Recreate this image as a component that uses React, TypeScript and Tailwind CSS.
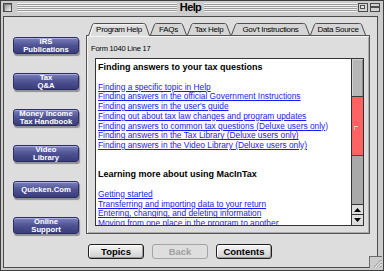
import React from 'react';

const sideButtons: string[][] = [
  ['IRS', 'Publications'],
  ['Tax', 'Q&A'],
  ['Money Income', 'Tax Handbook'],
  ['Video', 'Library'],
  ['Quicken.Com'],
  ['Online', 'Support'],
];

const tabs = [
  { label: 'Program Help', w: 62, cls: 'w-[62px]', active: true },
  { label: 'FAQs', w: 37, cls: 'w-[37px]', active: false },
  { label: 'Tax Help', w: 44, cls: 'w-[44px]', active: false },
  { label: "Gov't Instructions", w: 79, cls: 'w-[79px]', active: false },
  { label: 'Data Source', w: 56, cls: 'w-[56px]', active: false },
];

type Line = { kind: 'h' | 'a' | 'gap'; text?: string };

const lines: Line[] = [
  { kind: 'h', text: 'Finding answers to your tax questions' },
  { kind: 'gap' },
  { kind: 'a', text: 'Finding a specific topic in Help' },
  { kind: 'a', text: 'Finding answers in the official Government Instructions' },
  { kind: 'a', text: "Finding answers in the user's guide" },
  { kind: 'a', text: 'Finding out about tax law changes and program updates' },
  { kind: 'a', text: 'Finding answers to common tax questions (Deluxe users only)' },
  { kind: 'a', text: 'Finding answers in the Tax Library (Deluxe users only)' },
  { kind: 'a', text: 'Finding answers in the Video Library (Deluxe users only)' },
  { kind: 'gap' },
  { kind: 'gap' },
  { kind: 'h', text: 'Learning more about using MacInTax' },
  { kind: 'gap' },
  { kind: 'a', text: 'Getting started' },
  { kind: 'a', text: 'Transferring and importing data to your return' },
  { kind: 'a', text: 'Entering, changing, and deleting information' },
  { kind: 'a', text: 'Moving from one place in the program to another' },
];

const stripes =
  'h-[9px] bg-[repeating-linear-gradient(to_bottom,#f2f2f2_0px,#f2f2f2_1px,#9b9b9b_1px,#9b9b9b_2px)]';

function TitleBar() {
  return (
    <div className="h-[15px] flex items-start pt-[2px] pl-[2px] pr-[3px]">
      {/* close box */}
      <div className="w-[9px] h-[9px] border border-[#4a4a4a] bg-linear-to-br from-[#8e8e8e] to-[#f2f2f2] shadow-[inset_1px_1px_0_#7a7a7a]" />
      <div className={`ml-[5px] w-[160px] ${stripes}`} />
      <div className="w-[27px] h-[9px] flex items-center justify-center text-[11px] font-bold leading-none tracking-[-0.6px] text-black">
        Help
      </div>
      <div className={`flex-1 ${stripes}`} />
      {/* zoom box */}
      <div className="ml-[1px] w-[10px] h-[9px] border border-[#4a4a4a] bg-[#d2d2d2] p-px">
        <div className="w-[5px] h-[4px] border border-[#505050] bg-[#e8e8e8]" />
      </div>
      {/* collapse box */}
      <div className="ml-[2px] w-[10px] h-[9px] border border-[#4a4a4a] bg-[#d2d2d2] pt-[2px]">
        <div className="h-[2px] border-y border-[#505050]" />
      </div>
    </div>
  );
}

function SideButton({ text }: { text: string[] }) {
  return (
    <div className="w-[66px] h-[17px] rounded-[3px] border border-[#2b2d63] bg-linear-to-b from-[#7b7fbb] via-[#4f5393] to-[#3a3d7b] shadow-[inset_0_1px_0_#a9addf,1px_2px_1px_rgba(0,0,0,0.35)] flex flex-col items-center justify-center text-white font-bold text-[7.7px] leading-[7.5px] whitespace-nowrap">
      {text.map((t) => (
        <span key={t}>{t}</span>
      ))}
    </div>
  );
}

function Tab({ label, w, cls, active }: { label: string; w: number; cls: string; active: boolean }) {
  const h = active ? 13 : 12;
  const d = `M0.5 ${h} L4.5 1.5 Q5 0.5 6.5 0.5 L${w - 6.5} 0.5 Q${w - 5} 0.5 ${w - 4.5} 1.5 L${w - 0.5} ${h}`;
  return (
    <div
      className={`relative ${cls} ${active ? 'h-[13px] -mb-px z-10 pb-px' : 'h-[12px]'} flex items-center justify-center`}
    >
      <svg className="absolute inset-0" width={w} height={h} viewBox={`0 0 ${w} ${h}`}>
        <path d={d} fill={active ? '#dddddd' : '#d5d5d5'} stroke="#4f4f4f" strokeWidth="1" />
        {active && <path d={`M1.8 ${h} L5.6 2 L${w - 6.5} 1.6`} fill="none" stroke="#fafafa" strokeWidth="1" />}
      </svg>
      <span className="relative pt-px text-[8px] leading-none tracking-[-0.3px] text-black whitespace-nowrap">
        {label}
      </span>
    </div>
  );
}

function Scrollbar() {
  return (
    <div className="w-[12px] border-l border-[#333] flex flex-col bg-[#a9a9a9]">
      <div className="h-[38px] bg-[#b6b6b6] border-b border-[#3a3a3a] shadow-[inset_1px_1px_0_#d2d2d2,inset_-1px_0_0_#8a8a8a]" />
      <div className="h-[59px] bg-[#ff6262] border-b border-[#7a3030] flex items-center pl-[2px] pt-[3px]">
        <div className="w-[4px] h-[4px] border-l border-t border-[#ffc0c0]" />
      </div>
      <div className="flex-1" />
      <div className="h-[10px] border-t border-[#333] bg-[#dcdcdc] flex items-center justify-center">
        <svg width="7" height="4" viewBox="0 0 7 4">
          <path d="M3.5 0 L7 4 L0 4 Z" fill="#000" />
        </svg>
      </div>
      <div className="h-[11px] border-t border-[#333] bg-[#dcdcdc] flex items-center justify-center">
        <svg width="7" height="4" viewBox="0 0 7 4">
          <path d="M0 0 L7 0 L3.5 4 Z" fill="#000" />
        </svg>
      </div>
    </div>
  );
}

function PushButton({ label, disabled }: { label: string; disabled?: boolean }) {
  return (
    <div
      className={
        disabled
          ? 'w-[56px] h-[15px] rounded-[3px] border border-[#a4a4a4] bg-[#dedede] flex items-center justify-center text-[9.5px] font-bold leading-none text-[#a0a0a0]'
          : 'w-[56px] h-[15px] rounded-[3px] border border-[#1e1e1e] bg-linear-to-b from-[#f6f6f6] to-[#cfcfcf] shadow-[inset_-1px_-1px_0_#9c9c9c,inset_1px_1px_0_#ffffff] flex items-center justify-center text-[9.5px] font-bold leading-none text-black'
      }
    >
      {label}
    </div>
  );
}

function Grip() {
  return (
    <div className="absolute right-[1px] bottom-[2px] w-[13px] h-[12px] bg-[#cccccc] border-l border-t border-[#6a6a6a]">
      <svg width="12" height="11" viewBox="0 0 12 11">
        <path d="M4 10.5 L11.5 3 M7 10.5 L11.5 6 M10 10.5 L11.5 9" stroke="#777" strokeWidth="1" />
        <path d="M5 10.5 L11.5 4 M8 10.5 L11.5 7" stroke="#fff" strokeWidth="1" />
      </svg>
    </div>
  );
}

export default function App() {
  return (
    <div className="relative w-[384px] h-[271px] overflow-hidden border border-[#3f3f3f] bg-[#cccccc] flex flex-col font-['Liberation_Sans',Arial,sans-serif] select-none">
      <TitleBar />
      <div className="ml-[2px] mr-[5px] h-[252px] border border-[#4b4b4b] bg-[#dddddd] flex">
        {/* left button column */}
        <div className="w-[82px] flex flex-col pl-[9px] pt-[20px] gap-[19px]">
          {sideButtons.map((b) => (
            <SideButton key={b.join(' ')} text={b} />
          ))}
        </div>

        <div className="flex flex-col">
          <div className="h-[18px] flex items-end pl-[2px]">
            {tabs.map((t) => (
              <Tab key={t.label} {...t} />
            ))}
          </div>

          <div className="w-[284px] h-[199px] border border-[#555] bg-[#dddddd] shadow-[inset_1px_1px_0_#f4f4f4,inset_-1px_-1px_0_#ababab] flex flex-col">
            <div className="pl-[4px] pt-[8px] text-[7.5px] leading-[10px] tracking-[-0.2px] text-black">
              Form 1040 Line 17
            </div>
            <div className="ml-[8px] mt-[4px] w-[269px] h-[168px] border border-[#333] bg-white flex">
              <div className="flex-1 overflow-hidden pl-[2px] pt-[4px]">
                {lines.map((l, i) =>
                  l.kind === 'gap' ? (
                    <div key={i} className="h-[9.75px]" />
                  ) : l.kind === 'h' ? (
                    <div key={i} className="h-[9.75px] leading-[9.75px] text-[9px] font-bold text-black whitespace-nowrap">
                      {l.text}
                    </div>
                  ) : (
                    <div key={i} className="h-[9.75px] leading-[9.75px] text-[8.35px] whitespace-nowrap">
                      <span className="text-[#1a1af2] underline decoration-1 underline-offset-[1px]">{l.text}</span>
                    </div>
                  )
                )}
              </div>
              <Scrollbar />
            </div>
          </div>

          <div className="mt-[10px] flex gap-[8px] pl-[2px]">
            <PushButton label="Topics" />
            <PushButton label="Back" disabled />
            <PushButton label="Contents" />
          </div>
        </div>
      </div>
      <Grip />
    </div>
  );
}
